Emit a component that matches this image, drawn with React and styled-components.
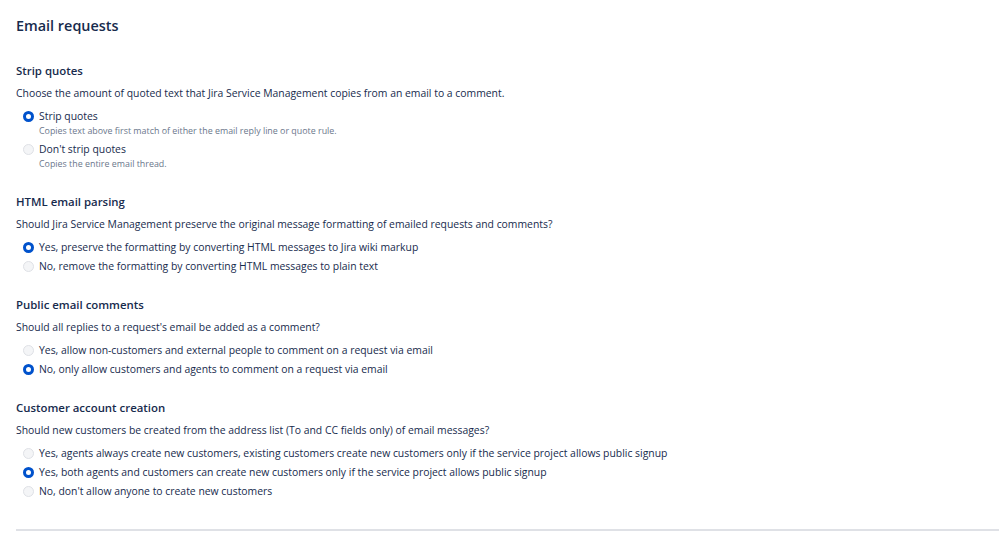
import styled, { createGlobalStyle } from "styled-components";

const GlobalStyle = createGlobalStyle`
  body {
    margin: 0;
    background: #fff;
    font-family: "Open Sans", "Noto Sans", sans-serif;
    color: #172b4d;
  }
`;

const sections = [
  {
    title: "Strip quotes",
    description:
      "Choose the amount of quoted text that Jira Service Management copies from an email to a comment.",
    options: [
      {
        label: "Strip quotes",
        hint: "Copies text above first match of either the email reply line or quote rule.",
        checked: true,
      },
      { label: "Don't strip quotes", hint: "Copies the entire email thread." },
    ],
  },
  {
    title: "HTML email parsing",
    description:
      "Should Jira Service Management preserve the original message formatting of emailed requests and comments?",
    options: [
      {
        label: "Yes, preserve the formatting by converting HTML messages to Jira wiki markup",
        checked: true,
      },
      { label: "No, remove the formatting by converting HTML messages to plain text" },
    ],
  },
  {
    title: "Public email comments",
    description: "Should all replies to a request's email be added as a comment?",
    options: [
      { label: "Yes, allow non-customers and external people to comment on a request via email" },
      {
        label: "No, only allow customers and agents to comment on a request via email",
        checked: true,
      },
    ],
  },
  {
    title: "Customer account creation",
    description:
      "Should new customers be created from the address list (To and CC fields only) of email messages?",
    options: [
      {
        label:
          "Yes, agents always create new customers, existing customers create new customers only if the service project allows public signup",
      },
      {
        label:
          "Yes, both agents and customers can create new customers only if the service project allows public signup",
        checked: true,
      },
      { label: "No, don't allow anyone to create new customers" },
    ],
  },
];

const App = () => (
  <Page>
    <GlobalStyle />
    <Title>Email requests</Title>
    <Sections>
      {sections.map((s) => (
        <Section key={s.title}>
          <Heading>{s.title}</Heading>
          <Description>{s.description}</Description>
          <Options>
            {s.options.map((o) => (
              <Option key={o.label}>
                <Radio $checked={o.checked} />
                <OptionText>
                  <Label>{o.label}</Label>
                  {o.hint && <Hint>{o.hint}</Hint>}
                </OptionText>
              </Option>
            ))}
          </Options>
        </Section>
      ))}
    </Sections>
    <Divider />
  </Page>
);

const Page = styled.div`
  padding: 14px 0 0 16px;
  width: 999px;
  height: 533px;
  box-sizing: border-box;
  display: flex;
  flex-direction: column;
`;

const Title = styled.h1`
  margin: 0;
  font-size: 14.4px;
  font-weight: 600;
  line-height: 24px;
  color: #172b4d;
`;

const Sections = styled.div`
  margin-top: 25px;
  display: flex;
  flex-direction: column;
  gap: 23px;
`;

const Section = styled.div`
  display: flex;
  flex-direction: column;
`;

const Heading = styled.h2`
  margin: 0;
  font-size: 11.4px;
  font-weight: 600;
  line-height: 16px;
  color: #172b4d;
`;

const Description = styled.p`
  margin: 6px 0 0;
  font-size: 10.4px;
  line-height: 16px;
  color: #172b4d;
`;

const Options = styled.div`
  margin-top: 7px;
  padding-left: 7px;
  display: flex;
  flex-direction: column;
  gap: 3px;
`;

const Option = styled.div`
  display: flex;
  align-items: flex-start;
  gap: 5px;
`;

const Radio = styled.span`
  flex: none;
  width: 11px;
  height: 11px;
  margin-top: 2.5px;
  border-radius: 50%;
  box-sizing: border-box;
  background: ${({ $checked }) => ($checked ? "#fff" : "#f4f5f7")};
  border: ${({ $checked }) =>
    $checked ? "3.5px solid #0052cc" : "1px solid #dfe1e6"};
`;

const OptionText = styled.div`
  display: flex;
  flex-direction: column;
`;

const Label = styled.span`
  font-size: 10.4px;
  line-height: 16px;
  color: #172b4d;
`;

const Hint = styled.span`
  font-size: 8.9px;
  line-height: 14px;
  color: #6b778c;
`;

const Divider = styled.hr`
  margin: auto 0 2px;
  border: none;
  border-top: 2px solid #dfe1e6;
  width: 100%;
`;

export default App;
